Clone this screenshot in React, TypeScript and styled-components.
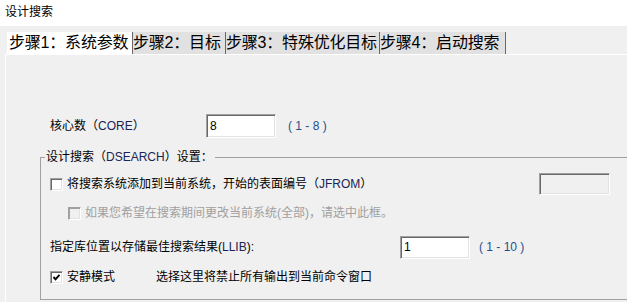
import styled, { createGlobalStyle } from "styled-components";

const GlobalStyle = createGlobalStyle`
  html, body {
    margin: 0;
    padding: 0;
  }
  body {
    width: 627px;
    height: 302px;
    overflow: hidden;
    background: #f0f0f0;
    font-family: "Liberation Sans", "Noto Sans CJK SC", sans-serif;
    font-size: 12px;
    line-height: 14px;
    color: #000;
  }
`;

const Window = styled.div`
  width: 627px;
  height: 302px;
  display: flex;
  flex-direction: column;
  overflow: hidden;
`;

const TitleBar = styled.div`
  height: 26px;
  box-sizing: border-box;
  padding: 5px 0 0 5px;
  background: #fff;
`;

const Body = styled.div`
  flex: 1;
  display: flex;
  flex-direction: column;
  padding-left: 5px;
  min-height: 0;
`;

const TabStrip = styled.div`
  display: flex;
  height: 28px;
  box-sizing: border-box;
  padding: 6px 0 0 2px;
`;

const Tab = styled.div<{ $active?: boolean; $w: number }>`
  width: ${(p) => p.$w}px;
  height: 22px;
  box-sizing: border-box;
  padding-left: ${(p) => (p.$active ? 1 : 0)}px;
  font-size: 16px;
  line-height: 21px;
  letter-spacing: -0.2px;
  white-space: nowrap;
  overflow: hidden;
  background: ${(p) => (p.$active ? "#fff" : "#e1e1e1")};
  border-left: ${(p) => (p.$active ? "1px solid #fff" : "none")};
  border-right: 1px solid #696969;
`;

const Panel = styled.div`
  flex: 1;
  min-height: 0;
  border-top: 1px solid #fff;
  border-left: 1px solid #fff;
  padding-left: 34px;
  overflow: hidden;
`;

const Row = styled.div<{ $top: number; $indent?: number }>`
  display: flex;
  align-items: center;
  height: 24px;
  margin-top: ${(p) => p.$top}px;
  padding-left: ${(p) => p.$indent ?? 0}px;
`;

const Label = styled.span<{ $w?: number; $disabled?: boolean }>`
  flex-shrink: 0;
  white-space: nowrap;
  ${(p) => (p.$w ? `width: ${p.$w}px;` : "")}
  color: ${(p) => (p.$disabled ? "#a0a0a0" : "#000")};
`;

const Latin = styled.span`
  color: #1b2456;
`;

const Range = styled.span<{ $gap: number }>`
  margin-left: ${(p) => p.$gap}px;
  color: #1f4f8c;
  white-space: pre;
`;

const TextField = styled.input<{ $w: number; $h: number }>`
  width: ${(p) => p.$w}px;
  height: ${(p) => p.$h}px;
  box-sizing: border-box;
  margin: 0;
  padding: 0 0 0 3px;
  flex-shrink: 0;
  font-family: "Liberation Sans", "Noto Sans CJK SC", sans-serif;
  font-size: 12px;
  color: #000;
  background: #fff;
  border-style: solid;
  border-width: 1px;
  border-color: #a0a0a0 #fff #fff #a0a0a0;
  box-shadow: inset 1px 1px 0 #696969, inset -1px -1px 0 #e3e3e3;
  outline: none;

  &:disabled {
    background: #f0f0f0;
  }
`;

const Group = styled.fieldset`
  margin: 12px -20px 0 0;
  padding: 0 0 10px 9px;
  min-width: 0;
  border: 1px solid #a0a0a0;
`;

const Legend = styled.legend`
  margin-left: -5px;
  padding: 0 2px 0 1px;
  line-height: 14px;
`;

const Box = styled.span<{ $disabled?: boolean }>`
  width: 13px;
  height: 13px;
  box-sizing: border-box;
  flex-shrink: 0;
  margin-right: 4px;
  display: inline-flex;
  align-items: center;
  justify-content: center;
  background: ${(p) => (p.$disabled ? "#f0f0f0" : "#fff")};
  border: 1px solid;
  border-color: #a0a0a0 #fff #fff #a0a0a0;
  box-shadow: ${(p) =>
    p.$disabled
      ? "inset 1px 1px 0 #a0a0a0, inset -1px -1px 0 #e3e3e3"
      : "inset 1px 1px 0 #696969, inset -1px -1px 0 #e3e3e3"};
`;

function CheckBox({ checked, disabled }: { checked?: boolean; disabled?: boolean }) {
  return (
    <Box $disabled={disabled}>
      {checked && (
        <svg width="7" height="7" viewBox="0 0 7 7">
          <path d="M0.5 3 L2.5 5.3 L6.5 0.8" fill="none" stroke="#000" strokeWidth="2" />
        </svg>
      )}
    </Box>
  );
}

export default function App() {
  return (
    <>
      <GlobalStyle />
      <Window>
        <TitleBar>设计搜索</TitleBar>
        <Body>
          <TabStrip>
            <Tab $active $w={126}>步骤1：系统参数</Tab>
            <Tab $w={93}>步骤2：目标</Tab>
            <Tab $w={154}>步骤3：特殊优化目标</Tab>
            <Tab $w={126}>步骤4：启动搜索</Tab>
          </TabStrip>
          <Panel>
            <Row $top={59} $indent={10}>
              <Label $w={156}>
                核心数（<Latin>CORE</Latin>）
              </Label>
              <TextField $w={70} $h={24} defaultValue="8" />
              <Range $gap={12}>( 1 - 8 )</Range>
            </Row>
            <Group>
              <Legend>
                设计搜索（<Latin>DSEARCH</Latin>）设置：
              </Legend>
              <Row $top={8}>
                <CheckBox />
                <Label $w={472}>
                  将搜索系统添加到当前系统，开始的表面编号（<Latin>JFROM</Latin>）
                </Label>
                <TextField $w={71} $h={22} disabled />
              </Row>
              <Row $top={5} $indent={18}>
                <CheckBox disabled />
                <Label $disabled>如果您希望在搜索期间更改当前系统(全部)，请选中此框。</Label>
              </Row>
              <Row $top={10} $indent={-1}>
                <Label $w={350}>
                  指定库位置以存储最佳搜索结果(<Latin>LLIB</Latin>):
                </Label>
                <TextField $w={70} $h={23} defaultValue="1" />
                <Range $gap={9}>( 1 - 10 )</Range>
              </Row>
              <Row $top={6}>
                <CheckBox checked />
                <Label $w={89}>安静模式</Label>
                <Label>选择这里将禁止所有输出到当前命令窗口</Label>
              </Row>
            </Group>
          </Panel>
        </Body>
      </Window>
    </>
  );
}
